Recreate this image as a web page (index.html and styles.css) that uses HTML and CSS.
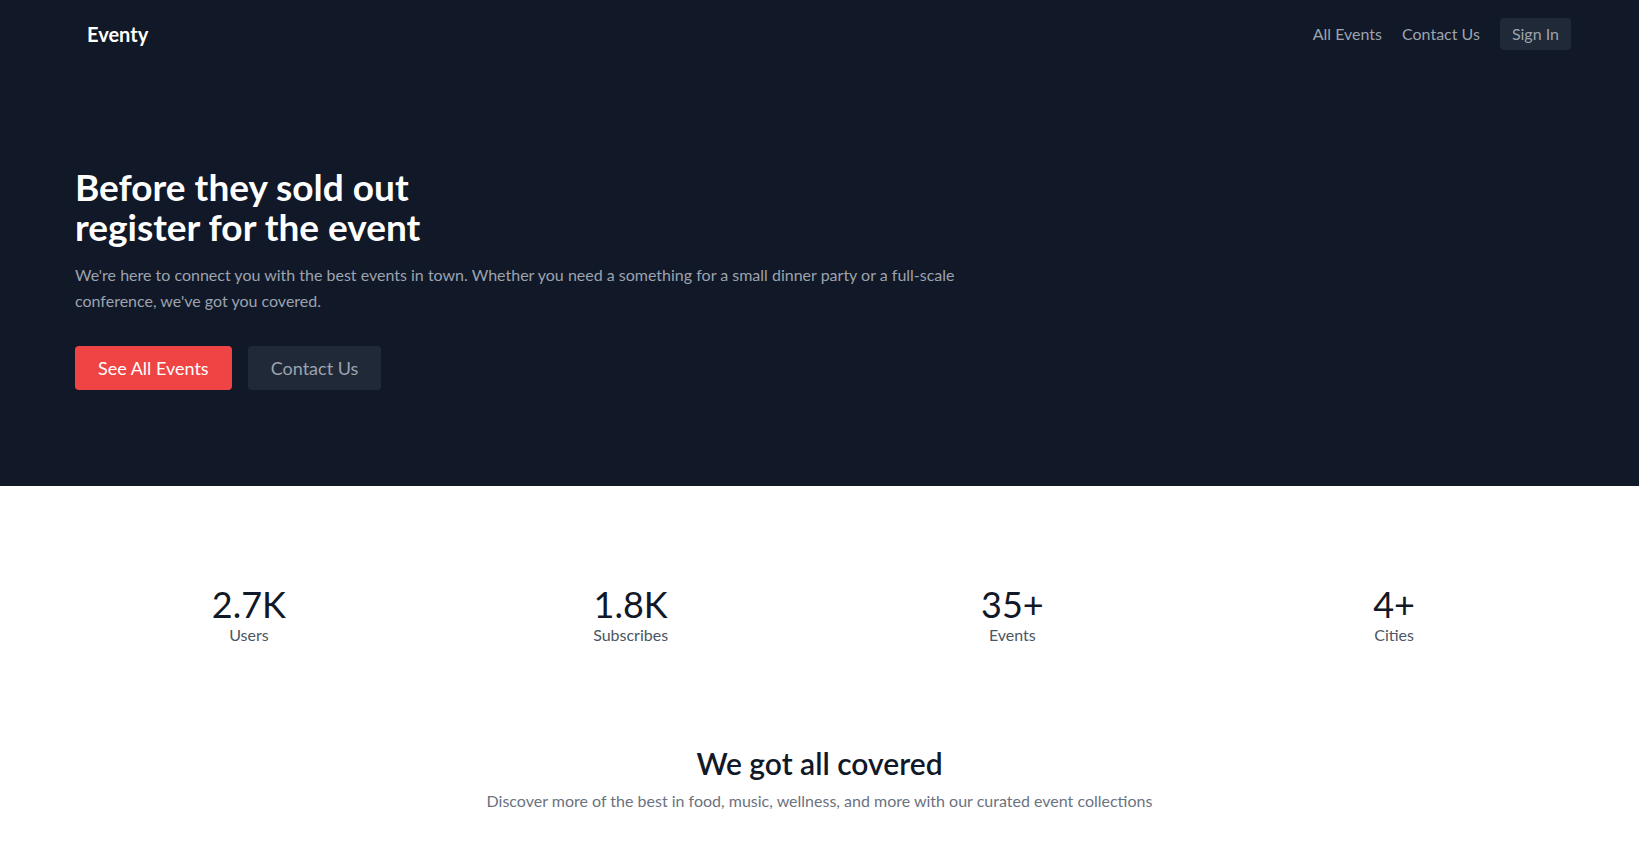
FILE: index.html
```html
<!DOCTYPE html>
<html lang="en">
<head>
<meta charset="utf-8">
<title>Eventy</title>
<link rel="stylesheet" href="styles.css">
</head>
<body>
<header class="hero">
  <nav class="nav">
    <a class="logo" href="#">Eventy</a>
    <div class="nav-links">
      <a class="nav-link" href="#">All Events</a>
      <a class="nav-link" href="#">Contact Us</a>
      <a class="nav-btn" href="#">Sign In</a>
    </div>
  </nav>
  <div class="hero-body">
    <h1 class="hero-title">Before they sold out<br>register for the event</h1>
    <p class="hero-text">We're here to connect you with the best events in town. Whether you need a something for a small dinner party or a full-scale conference, we've got you covered.</p>
    <div class="hero-actions">
      <a class="btn btn-primary" href="#">See All Events</a>
      <a class="btn btn-dark" href="#">Contact Us</a>
    </div>
  </div>
</header>
<section class="stats">
  <div class="stat"><div class="stat-num">2.7K</div><div class="stat-label">Users</div></div>
  <div class="stat"><div class="stat-num">1.8K</div><div class="stat-label">Subscribes</div></div>
  <div class="stat"><div class="stat-num">35+</div><div class="stat-label">Events</div></div>
  <div class="stat"><div class="stat-num">4+</div><div class="stat-label">Cities</div></div>
</section>
<section class="covered">
  <h2 class="covered-title">We got all covered</h2>
  <p class="covered-text">Discover more of the best in food, music, wellness, and more with our curated event collections</p>
</section>
</body>
</html>
```
FILE: styles.css
```css
* { box-sizing: border-box; }
html, body { margin: 0; padding: 0; }
body {
  font-family: Lato, "Open Sans", sans-serif;
  background: #ffffff;
  color: #111827;
}
a { text-decoration: none; }

.hero {
  background: #111827;
  padding-bottom: 96px;
}
.nav {
  display: flex;
  align-items: center;
  justify-content: space-between;
  padding: 18px 68px 20px 87px;
}
.logo {
  color: #ffffff;
  font-size: 20px;
  font-weight: 700;
  line-height: 28px;
}
.nav-links {
  display: flex;
  align-items: center;
  gap: 20px;
}
.nav-link {
  color: #9ca3af;
  font-size: 16px;
  line-height: 24px;
}
.nav-btn {
  color: #9ca3af;
  font-size: 16px;
  line-height: 24px;
  background: #1f2937;
  border-radius: 4px;
  padding: 4px 12px;
}

.hero-body {
  padding: 97px 0 0 75px;
}
.hero-title {
  margin: 0;
  color: #ffffff;
  font-size: 37px;
  line-height: 40px;
  font-weight: 700;
}
.hero-text {
  margin: 15px 0 0;
  max-width: 896px;
  color: #9ca3af;
  font-size: 16px;
  line-height: 26px;
}
.hero-actions {
  display: flex;
  gap: 16px;
  margin-top: 32px;
}
.btn {
  display: inline-block;
  font-size: 18px;
  line-height: 28px;
  padding: 8px 23px;
  border-radius: 4px;
}
.btn-primary {
  background: #ef4444;
  color: #ffffff;
}
.btn-dark {
  background: #1f2937;
  color: #9ca3af;
}

.stats {
  display: grid;
  grid-template-columns: repeat(4, 1fr);
  padding: 98px 54px 0 58px;
}
.stat {
  text-align: center;
}
.stat-num {
  font-size: 36px;
  line-height: 40px;
  font-weight: 400;
  color: #111827;
}
.stat-label {
  font-size: 16px;
  line-height: 22px;
  color: #4b5563;
}

.covered {
  padding: 99px 0 40px;
  text-align: center;
}
.covered-title {
  margin: 0;
  font-size: 30px;
  line-height: 36px;
  font-weight: 600;
  color: #111827;
}
.covered-text {
  margin: 8px 0 0;
  font-size: 16px;
  line-height: 24px;
  color: #6b7280;
}
```
